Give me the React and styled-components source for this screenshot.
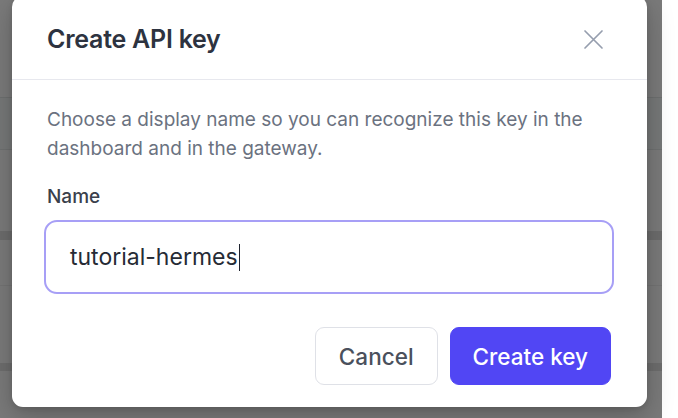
import React from "react";
import styled, { createGlobalStyle } from "styled-components";

const Global = createGlobalStyle`
  html, body { margin: 0; padding: 0; }
  body {
    width: 678px;
    height: 418px;
    overflow: hidden;
    font-family: Inter, "Noto Sans", "Liberation Sans", sans-serif;
    -webkit-font-smoothing: antialiased;
  }
  * { box-sizing: border-box; }
`;

const Page = styled.div`
  position: relative;
  display: flex;
  width: 678px;
  height: 418px;
  background: #ffffff;
`;

/* dimmed dashboard behind the dialog */
const Dimmed = styled.div`
  width: 662px;
  height: 418px;
  display: flex;
  flex-direction: column;
  background: #7a7a7a;
`;

const Band = styled.div`
  height: ${(p) => p.$h}px;
  flex: none;
  background: ${(p) => p.$bg || "transparent"};
  border-bottom: ${(p) => (p.$line ? `1px solid ${p.$line}` : "none")};
`;

const Gutter = styled.div`
  width: 16px;
  height: 418px;
  background: #ffffff;
`;

const Dialog = styled.div`
  position: absolute;
  left: 12px;
  top: -4px;
  width: 635px;
  background: #ffffff;
  border-radius: 11px;
  box-shadow: 0 10px 28px rgba(0, 0, 0, 0.22), 0 2px 6px rgba(0, 0, 0, 0.12);
  display: flex;
  flex-direction: column;
`;

const Header = styled.div`
  height: 84px;
  padding: 3px 35px 0 35px;
  display: flex;
  align-items: center;
  justify-content: space-between;
  border-bottom: 1.5px solid #e7e8ee;
`;

const Title = styled.h2`
  margin: 0;
  font-size: 25px;
  font-weight: 600;
  letter-spacing: -0.01em;
  color: #2d3340;
`;

const CloseButton = styled.button`
  border: 0;
  background: none;
  padding: 0;
  margin-right: 7px;
  width: 24px;
  height: 24px;
  display: flex;
  align-items: center;
  justify-content: center;
  color: #969eae;
  cursor: pointer;
`;

const Body = styled.div`
  padding: 25px 34px 22px 35px;
  display: flex;
  flex-direction: column;
`;

const Description = styled.p`
  margin: 0;
  font-size: 19px;
  line-height: 29px;
  letter-spacing: 0;
  color: #6b7280;
`;

const Label = styled.label`
  margin-top: 22px;
  font-size: 19px;
  line-height: 24px;
  font-weight: 500;
  letter-spacing: 0;
  color: #3a404b;
`;

const Field = styled.div`
  margin-top: 11px;
  margin-left: -3px;
  margin-right: -1px;
  height: 74px;
  border: 2px solid #a79ff6;
  border-radius: 13px;
  padding: 0 24px;
  display: flex;
  align-items: center;
  font-size: 23px;
  letter-spacing: 0;
  color: #262b35;
`;

const Caret = styled.span`
  display: inline-block;
  width: 1.5px;
  height: 27px;
  margin-left: 1px;
  background: #1f2430;
`;

const Actions = styled.div`
  margin-top: 33px;
  display: flex;
  justify-content: flex-end;
  gap: 12px;
  margin-right: 2px;
`;

const Button = styled.button`
  height: 58px;
  padding: 0 ${(p) => (p.$primary ? 22 : 23)}px;
  border-radius: 9px;
  font-family: inherit;
  font-size: 22.5px;
  font-weight: 500;
  letter-spacing: 0;
  cursor: pointer;
  border: 1.5px solid ${(p) => (p.$primary ? "#5146f4" : "#dfe1e7")};
  background: ${(p) => (p.$primary ? "#5146f4" : "#ffffff")};
  color: ${(p) => (p.$primary ? "#ffffff" : "#4a505c")};
`;

export default function App() {
  return (
    <>
      <Global />
      <Page>
        <Dimmed>
          <Band $h={98} $line="#6d6f6f" />
          <Band $h={52} $bg="#767878" $line="#6e7070" />
          <Band $h={81} />
          <Band $h={9} $bg="#6c6c6c" />
          <Band $h={46} $line="#737373" />
          <Band $h={77} />
          <Band $h={8} $bg="#6d6d6d" />
        </Dimmed>
        <Gutter />
        <Dialog role="dialog" aria-labelledby="create-key-title">
          <Header>
            <Title id="create-key-title">Create API key</Title>
            <CloseButton aria-label="Close">
              <svg width="21" height="21" viewBox="0 0 21 21" fill="none">
                <path
                  d="M2 2L19 19M19 2L2 19"
                  stroke="currentColor"
                  strokeWidth="1.7"
                  strokeLinecap="round"
                />
              </svg>
            </CloseButton>
          </Header>
          <Body>
            <Description>
              Choose a display name so you can recognize this key in the
              dashboard and in the gateway.
            </Description>
            <Label>Name</Label>
            <Field>
              tutorial-hermes
              <Caret />
            </Field>
            <Actions>
              <Button>Cancel</Button>
              <Button $primary>Create key</Button>
            </Actions>
          </Body>
        </Dialog>
      </Page>
    </>
  );
}
